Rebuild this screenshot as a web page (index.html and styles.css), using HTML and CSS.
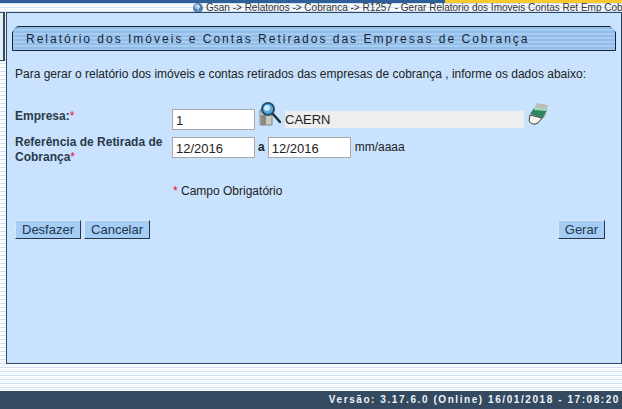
FILE: index.html
```html
<!DOCTYPE html>
<html lang="pt">

<head>
    <meta charset="UTF-8">
    <title>Relatório dos Imóveis e Contas Retirados</title>
    <link rel="stylesheet" href="styles.css">
</head>

<body>
    <div class="top-bar">
        <div class="top-blue"></div>
        <div class="top-yellow"></div>
    </div>

    <div class="breadcrumb">
        <svg class="help-icon" width="10" height="10" viewBox="0 0 10 10">
            <circle cx="5" cy="5" r="5" fill="#4f7fb5"/>
            <circle cx="4" cy="3.5" r="2.5" fill="#9dbce0"/>
            <path d="M3.5 3.6 Q5 2 6.5 3.4 Q6.6 4.6 5 5.4 V6.2" fill="none" stroke="#fff" stroke-width="1"/>
            <rect x="4.5" y="7" width="1" height="1" fill="#fff"/>
        </svg>
        <span class="crumb-text">Gsan -&gt; Relatorios -&gt; Cobranca -&gt; R1257 - Gerar Relatorio dos Imoveis Contas Ret Emp Cob</span>
    </div>

    <div class="middle">
        <div class="gutter">
            <div class="menu-stub"></div>
        </div>

        <div class="panel">
            <div class="title-bar">
                <h1>Relatório dos Imóveis e Contas Retirados das Empresas de Cobrança</h1>
            </div>

            <p class="intro">Para gerar o relatório dos imóveis e contas retirados das empresas de cobrança , informe os dados abaixo:</p>

            <div class="form-row row-empresa">
                <label class="field-label">Empresa:<span class="req">*</span></label>
                <input class="field" type="text" value="1">
                <svg class="lookup-icon" width="24" height="24" viewBox="-2 0 24 24">
                    <path d="M1 8 H9 L13 11 V23 H1 Z" fill="#c9c9c4" stroke="#85857e"/>
                    <rect x="2" y="13" width="5" height="10" fill="#8a8a83"/>
                    <path d="M14 12 L21 20" stroke="#1d2a33" stroke-width="2.4" stroke-linecap="round"/>
                    <circle cx="9" cy="7" r="6" fill="#5aa9e0" stroke="#24506f" stroke-width="2"/>
                    <circle cx="8" cy="6" r="3" fill="#c9ecfb"/>
                </svg>
                <div class="name-box">CAERN</div>
                <svg class="eraser-icon" width="22" height="24" viewBox="0 0 22 24">
                    <path d="M10 1 L21 3 L18 15 L8 23 L2 18 Z" fill="#bdbdb8"/>
                    <path d="M7 6 L20 8 L16 16 L3 12 Z" fill="#2f8560"/>
                    <path d="M8 5 L20 7 L19 9 L7 8 Z" fill="#a6d8bd"/>
                    <path d="M3 13 L15 16 L11 21 Q5 24 2 19 Z" fill="#f4f4f0" stroke="#45453f"/>
                </svg>
            </div>

            <div class="form-row row-ref">
                <label class="field-label">Referência de Retirada de Cobrança<span class="req">*</span></label>
                <input class="field" type="text" value="12/2016">
                <b class="sep">a</b>
                <input class="field" type="text" value="12/2016">
                <span class="hint">mm/aaaa</span>
            </div>

            <p class="required-note"><span class="req">*</span> Campo Obrigatório</p>

            <div class="actions">
                <button class="btn" type="button">Desfazer</button>
                <button class="btn" type="button">Cancelar</button>
                <button class="btn btn-right" type="button">Gerar</button>
            </div>
        </div>
    </div>

    <div class="footer">Versão: 3.17.6.0 (Online) 16/01/2018 - 17:08:20</div>
</body>

</html>
```

FILE: styles.css
```css
/* pagina inteira */
html, body {
    margin: 0;
    height: 409px;
    overflow: hidden;
}

html {
    background-color: #fff;
}

body {
    display: flex;
    flex-direction: column;
    font-family: "Liberation Sans", Arial, sans-serif;
    font-size: 12px;
    color: #222;
    background-image: linear-gradient(to bottom, #ffffff 0, #ffffff 1px, #eef6fc 1px, #eef6fc 2px, #ffffff 2px, #ffffff 3px, #cfe1f0 3px, #cfe1f0 4px);
    background-size: 100% 4px;
}

/* faixa do topo */
.top-bar {
    display: flex;
    height: 3px;
    flex: none;
}

.top-blue {
    width: 445px;
    background-color: #2f5f98;
}

.top-yellow {
    flex: 1;
    background-color: #fbc92e;
}

.breadcrumb {
    display: flex;
    flex: none;
    align-items: center;
    height: 9px;
    padding-left: 193px;
    overflow: hidden;
    white-space: nowrap;
    font-size: 10px;
    color: #333;
}

.help-icon {
    flex: none;
    margin-right: 3px;
}

.middle {
    display: flex;
    flex: none;
    height: 352px;
}

.gutter {
    width: 6px;
    flex: none;
}

.menu-stub {
    width: 3px;
    height: 47px;
    border: 1px solid #34495f;
    border-left: 0;
    border-right-width: 2px;
    background-color: #e6f0f8;
}

.panel {
    flex: 1;
    display: flex;
    flex-direction: column;
    padding: 13px 5px 0 5px;
    background-color: #c9e3fe;
    border: 1px solid #2c4560;
}

.title-bar {
    height: 23px;
    display: flex;
    align-items: center;
    padding-left: 13px;
    border: 1px solid #14263b;
    border-radius: 7px 7px 0 0;
    clip-path: polygon(5px 0, calc(100% - 6px) 0, 100% 6px, 100% 100%, 0 100%, 0 6px);
    background: repeating-linear-gradient(to bottom, #92bde8 0, #92bde8 2px, #a9cdf0 2px, #a9cdf0 4px);
}

.title-bar h1 {
    margin: 0;
    font-size: 12px;
    font-weight: normal;
    letter-spacing: 2px;
    color: #14263b;
    white-space: nowrap;
}

.intro {
    margin: 16px 0 0 3px;
    font-size: 12px;
    white-space: nowrap;
}

.form-row {
    display: flex;
    margin-left: 3px;
}

.row-empresa {
    height: 28px;
    margin-top: 28px;
    align-items: flex-start;
}

.row-ref {
    align-items: flex-start;
}

.field-label {
    flex: none;
    width: 157px;
    font-weight: bold;
    line-height: 15px;
    color: #2a3a4a;
}

.row-ref .field-label {
    margin-top: -2px;
}

.req {
    color: #e0103a;
    font-weight: normal;
}

.field {
    box-sizing: border-box;
    width: 83px;
    height: 21px;
    padding: 2px 3px 0;
    border: 1px solid #a8a8a8;
    background: #fff;
    font-family: "Liberation Sans", Arial, sans-serif;
    font-size: 13px;
    color: #222;
}

.lookup-icon {
    flex: none;
    margin: -7px 0 0 2px;
}

.name-box {
    width: 239px;
    height: 17px;
    margin: 2px 0 0 4px;
    line-height: 18px;
    font-size: 13px;
    background-color: #eeeeee;
    color: #222;
}

.eraser-icon {
    flex: none;
    margin: -7px 0 0 3px;
}

.sep {
    margin: 3px 3px 0 3px;
    font-size: 12px;
}

.hint {
    margin: 3px 0 0 4px;
    font-size: 12px;
}

.required-note {
    margin: 19px 0 0 161px;
    font-size: 12px;
}

.actions {
    display: flex;
    gap: 3px;
    margin: 22px 11px 0 3px;
}

.btn {
    box-sizing: border-box;
    height: 19px;
    padding: 0 6px;
    border: 1px solid;
    border-color: #d7e6f5 #23364a #23364a #d7e6f5;
    background-color: #a5cdf5;
    font-family: "Liberation Sans", Arial, sans-serif;
    font-size: 13px;
    line-height: 15px;
    color: #23364a;
}

.btn-right {
    margin-left: auto;
}

.footer {
    height: 18px;
    margin-top: auto;
    flex: none;
    padding-right: 2px;
    background-color: #334a60;
    color: #eef3f8;
    font-size: 10px;
    font-weight: bold;
    line-height: 18px;
    letter-spacing: 1.57px;
    text-align: right;
    white-space: nowrap;
}
```
